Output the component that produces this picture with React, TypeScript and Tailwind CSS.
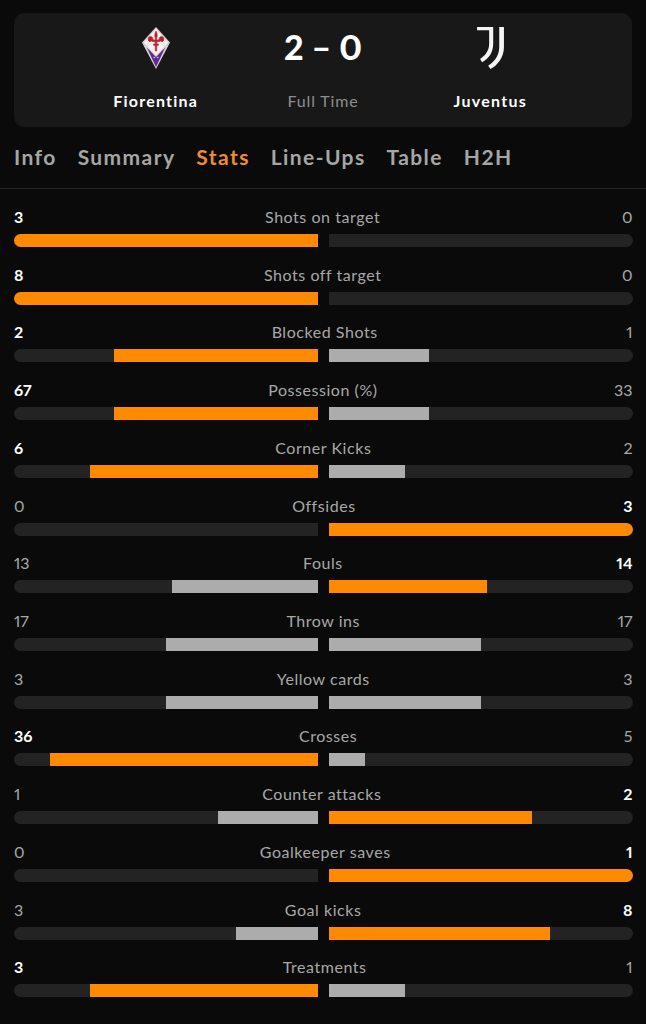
const stats = [
  { label: "Shots on target", home: 3, away: 0 },
  { label: "Shots off target", home: 8, away: 0 },
  { label: "Blocked Shots", home: 2, away: 1 },
  { label: "Possession (%)", home: 67, away: 33 },
  { label: "Corner Kicks", home: 6, away: 2 },
  { label: "Offsides", home: 0, away: 3 },
  { label: "Fouls", home: 13, away: 14 },
  { label: "Throw ins", home: 17, away: 17 },
  { label: "Yellow cards", home: 3, away: 3 },
  { label: "Crosses", home: 36, away: 5 },
  { label: "Counter attacks", home: 1, away: 2 },
  { label: "Goalkeeper saves", home: 0, away: 1 },
  { label: "Goal kicks", home: 3, away: 8 },
  { label: "Treatments", home: 3, away: 1 },
];

const tabs = ["Info", "Summary", "Stats", "Line-Ups", "Table", "H2H"];

function FiorentinaLogo() {
  return (
    <svg width="28" height="42" viewBox="0 0 28 42">
      <path d="M14 0 L28 15.5 L14 42 L0 15.5 Z" fill="#d9d2cf" />
      <path d="M4.8 20.5 L14 30 L23.2 20.5 L14 40 Z" fill="#5f2a96" />
      <path d="M2 15.5 L14 2 L26 15.5 L14 28.5 Z" fill="#f6f3f2" />
      <g transform="translate(-1 -3)" stroke="#c21f2e" strokeWidth="0.7">
        <path d="M15 7 C16.5 10 16.5 12 15.6 14 L15.6 16 L18 16 C18 13 20 11.5 22 13 C23.5 14.5 23 17 21 18 C20.5 16.8 19.5 16.5 18.6 17.4 L15.8 17.8 L15.8 20 L17.5 20 L17.5 21.2 L15.8 21.2 L15.6 27 L14.4 27 L14.2 21.2 L12.5 21.2 L12.5 20 L14.2 20 L14.2 17.8 L11.4 17.4 C10.5 16.5 9.5 16.8 9 18 C7 17 6.5 14.5 8 13 C10 11.5 12 13 12 16 L14.4 16 L14.4 14 C13.5 12 13.5 10 15 7 Z" fill="#c21f2e" />
      </g>
      <circle cx="12.3" cy="30.5" r="0.8" fill="#d8cce8" />
      <circle cx="15.7" cy="30.5" r="0.8" fill="#d8cce8" />
    </svg>
  );
}

function JuventusLogo() {
  return (
    <svg width="27" height="42" viewBox="0 0 80 125" fill="#f5f5f5">
      <path d="M0 0 L48 0 L48 50 C48 75 35 95 15 105 L9 95 C25 85 36 70 36 50 L36 10 L0 10 Z" />
      <path d="M66 0 L80 0 L80 60 C80 90 60 115 40 125 L33 115 C50 105 66 85 66 60 Z" />
    </svg>
  );
}

function Bar({ value, other, side }: { value: number; other: number; side: "home" | "away" }) {
  const total = value + other;
  const pct = total === 0 ? 0 : Math.round((value / total) * 100);
  return (
    <div className={`flex h-[13px] flex-1 overflow-hidden bg-[#232323] ${side === "home" ? "justify-end rounded-l-full" : "justify-start rounded-r-full"}`}>
      <div
        className={`h-full ${value > other ? "bg-[#ff8a00]" : "bg-[#acacac]"}`}
        style={{ width: `${pct}%` }}
      />
    </div>
  );
}

function StatRow({ label, home, away }: { label: string; home: number; away: number }) {
  return (
    <div className="flex h-[57.72px] flex-col">
      <div className="flex h-[20px] items-center justify-between text-[16px] leading-5 text-[#a8a8a8] proportional-nums">
        <span className={home > away ? "font-bold text-white" : ""}>{home}</span>
        <span className="tracking-[0.55px]">{label}</span>
        <span className={away > home ? "font-bold text-white" : ""}>{away}</span>
      </div>
      <div className="mt-[7px] flex gap-[11px]">
        <Bar value={home} other={away} side="home" />
        <Bar value={away} other={home} side="away" />
      </div>
    </div>
  );
}

export default function App() {
  return (
    <div className="h-[1024px] overflow-hidden bg-[#0a0a0a] font-['Lato',sans-serif]">
      {/* Match header */}
      <div className="px-[14px] pt-[13px]">
        <div className="grid h-[114px] grid-cols-3 rounded-[10px] bg-[#181818] px-[58px] pt-[9px]">
          <div className="flex flex-col items-center">
            <div className="flex h-[52px] items-center"><FiorentinaLogo /></div>
            <span className="mt-[17px] text-[16px] leading-5 font-bold tracking-[1.2px] text-white">Fiorentina</span>
          </div>
          <div className="flex flex-col items-center">
            <div className="flex h-[50px] items-center text-[34px] leading-none font-black text-white proportional-nums">2 – 0</div>
            <span className="mt-[19px] text-[16px] leading-5 tracking-[0.85px] text-[#8e8e8e]">Full Time</span>
          </div>
          <div className="flex flex-col items-center">
            <div className="flex h-[52px] items-center"><JuventusLogo /></div>
            <span className="mt-[17px] text-[16px] leading-5 font-bold tracking-[1.3px] text-white">Juventus</span>
          </div>
        </div>
      </div>

      {/* Tabs */}
      <nav className="flex h-[62px] items-center gap-[21px] border-b border-[#262626] px-[14px] pb-[1px] text-[21px] font-bold tracking-[1.4px] text-[#a6a6a6]">
        {tabs.map((tab) => (
          <span key={tab} className={tab === "Stats" ? "text-[#f08a34]" : ""}>{tab}</span>
        ))}
      </nav>

      {/* Stats */}
      <div className="pt-[18px] pr-[13.5px] pl-[14px]">
        {stats.map((s) => (
          <StatRow key={s.label} {...s} />
        ))}
      </div>
    </div>
  );
}
